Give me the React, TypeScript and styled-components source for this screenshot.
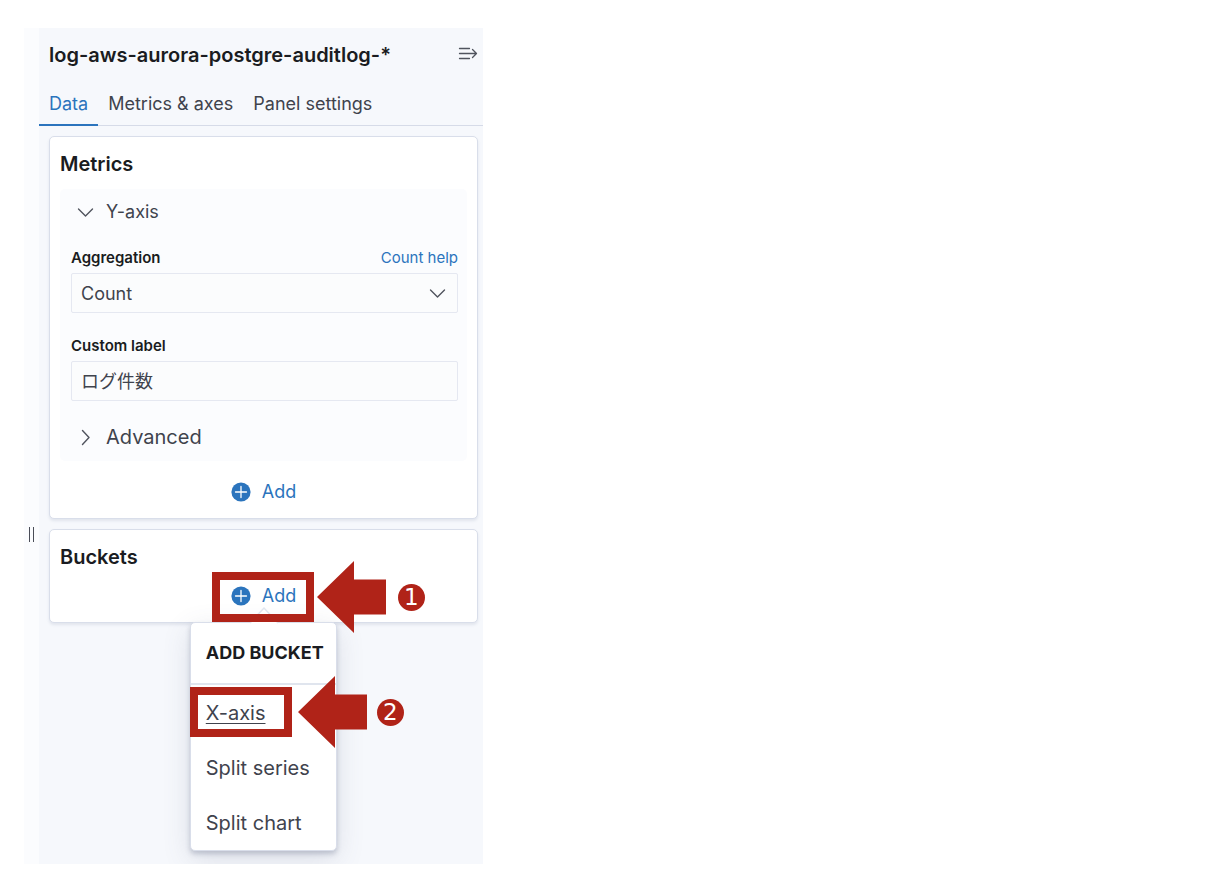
import React from "react";
import styled, { createGlobalStyle, css } from "styled-components";

const blue = "#2b74bd";
const ink = "#1a1c21";
const text = "#3f434d";
const red = "#b02318";

const GlobalStyle = createGlobalStyle`
  *, *::before, *::after { box-sizing: border-box; }
  body {
    margin: 0;
    background: #fff;
    color: ${text};
    font-family: Inter, "Noto Sans CJK JP", sans-serif;
    font-size: 18px;
    line-height: 24px;
  }
  button, input, select { font: inherit; color: inherit; margin: 0; }
  h1, h2, h3, ul { margin: 0; padding: 0; }
`;

const Page = styled.div`
  display: flex;
  min-height: 100vh;
  padding: 28px 24px 30px;
`;

const Sidebar = styled.aside`
  display: flex;
  flex: 0 1 459px;
  min-width: 0;
`;

const Resizer = styled.button`
  display: flex;
  flex: none;
  width: 15px;
  align-items: center;
  justify-content: center;
  gap: 3px;
  padding: 176px 0 0;
  border: 0;
  background: #fbfcfe;
  cursor: col-resize;
  &::before, &::after {
    content: "";
    width: 1px;
    height: 15px;
    background: #4a4d57;
  }
`;

const Panel = styled.div`
  flex: 1;
  min-width: 0;
  overflow: clip;
  background: #f6f8fc;
`;

const TitleBar = styled.header`
  display: flex;
  align-items: center;
  justify-content: space-between;
  height: 52px;
  padding: 0 5px 0 10px;
`;

const Title = styled.h1`
  padding-top: 2px;
  color: ${ink};
  font-size: 20px;
  font-weight: 600;
  line-height: 24px;
`;

const IconButton = styled.button`
  display: flex;
  padding: 0;
  border: 0;
  background: none;
  cursor: pointer;
`;

const Tabs = styled.nav`
  display: flex;
  height: 46px;
  box-shadow: inset 0 -1px 0 #d6dbe8;
`;

const Tab = styled.button<{ $active?: boolean }>`
  padding: 2px 10px 0;
  border: 0;
  background: none;
  box-shadow: ${(p) => (p.$active ? `inset 0 -2px 0 ${blue}` : "none")};
  color: ${(p) => (p.$active ? blue : text)};
  white-space: nowrap;
  cursor: pointer;
`;

const Cards = styled.div`
  display: flex;
  flex-direction: column;
  gap: 10px;
  padding: 10px 5px 10px 10px;
`;

const Card = styled.section`
  padding: 10px 10px 5px;
  border: 1px solid #d9deea;
  border-radius: 5px;
  background: #fff;
  box-shadow: 0 2px 3px rgba(120, 130, 160, 0.16);
`;

const CardTitle = styled.h2`
  padding-top: 2px;
  color: ${ink};
  font-size: 20px;
  font-weight: 600;
  line-height: 30px;
`;

const Group = styled.div`
  margin-top: 10px;
  padding: 0 9px 0 11px;
  border-radius: 5px;
  background: #fbfcfe;
`;

const Toggle = styled.button<{ $large?: boolean }>`
  display: flex;
  align-items: center;
  gap: 12px;
  width: 100%;
  height: ${(p) => (p.$large ? 48 : 46)}px;
  padding: 0 0 0 6px;
  border: 0;
  background: none;
  font-size: ${(p) => (p.$large ? 20 : 18)}px;
  cursor: pointer;
`;

const Field = styled.div<{ $first?: boolean }>`
  padding: ${(p) => (p.$first ? 10 : 20)}px 0 0;
  &:last-of-type { padding-bottom: 12px; }
`;

const LabelRow = styled.div`
  display: flex;
  justify-content: space-between;
  padding-top: 1px;
  margin-bottom: 3px;
  font-size: 15px;
`;

const Label = styled.label`
  color: ${ink};
  font-weight: 600;
`;

const HelpLink = styled.a`
  color: ${blue};
  text-decoration: none;
`;

const control = css`
  display: block;
  width: 100%;
  height: 40px;
  padding: 0 9px;
  border: 1px solid #e5e8f1;
  border-radius: 2px;
  background: #fbfcfd;
  font-size: 18px;
  outline: 0;
`;

const SelectWrap = styled.div`
  display: grid;
  align-items: center;
  > * { grid-area: 1 / 1; }
  > svg {
    justify-self: end;
    margin-right: 12px;
    pointer-events: none;
  }
`;

const Select = styled.select`
  ${control}
  padding-top: 2px;
  appearance: none;
`;

const Input = styled.input`
  ${control}
  padding-bottom: 2px;
`;

const AddRow = styled.div<{ $gap: number }>`
  display: flex;
  justify-content: center;
  margin-top: ${(p) => p.$gap}px;
`;

const Anchor = styled.div`
  position: relative;
`;

const AddButton = styled.button`
  display: flex;
  align-items: center;
  gap: 11px;
  height: 42px;
  padding: 0;
  border: 0;
  background: none;
  color: ${blue};
  cursor: pointer;
`;

const Popover = styled.div`
  position: absolute;
  z-index: 1;
  top: 47px;
  left: -41px;
  width: 147px;
  border: 1px solid #d9deea;
  border-radius: 5px;
  background: #fff;
  box-shadow: 0 3px 5px rgba(80, 90, 120, 0.28), 0 8px 28px rgba(80, 90, 120, 0.16);
`;

const Beak = styled.svg`
  position: absolute;
  top: -17px;
  left: 59px;
`;

const PopoverTitle = styled.h3`
  padding: 18px 15px;
  border-bottom: 2px solid #e0e5ee;
  color: ${ink};
  font-size: 18px;
  font-weight: 700;
  line-height: 24px;
  white-space: nowrap;
`;

const Menu = styled.ul`
  list-style: none;
`;

const MenuEntry = styled.li`
  position: relative;
`;

const MenuItem = styled.button<{ $focused?: boolean }>`
  width: 100%;
  height: 55px;
  padding: 0 15px;
  border: 0;
  background: none;
  font-size: 20px;
  text-align: left;
  text-decoration: ${(p) => (p.$focused ? "underline" : "none")};
  text-decoration-thickness: 1px;
  text-underline-offset: 3px;
  white-space: nowrap;
  cursor: pointer;
`;

const Callout = styled.div<{ $top: number; $left: number }>`
  position: absolute;
  z-index: 2;
  top: ${(p) => p.$top}px;
  left: ${(p) => p.$left}px;
  display: flex;
  align-items: center;
  pointer-events: none;
`;

const Frame = styled.span`
  width: 102px;
  height: 50px;
  border: 8px solid ${red};
`;

const Arrow = styled.svg<{ $gap: number }>`
  margin-left: ${(p) => p.$gap}px;
`;

const Step = styled.span<{ $gap: number }>`
  display: grid;
  place-items: center;
  width: 27px;
  height: 27px;
  margin-left: ${(p) => p.$gap}px;
  border-radius: 50%;
  background: ${red};
  color: #fff;
  font: 23px/27px "DejaVu Sans", sans-serif;
`;

function Chevron({ right }: { right?: boolean }) {
  return (
    <svg width="17" height="17" viewBox="0 0 17 17" fill="none" stroke="#50545e" strokeWidth="1.4" strokeLinecap="round" strokeLinejoin="round">
      <path d={right ? "M5.5 1.5 L12 8.5 L5.5 15.5" : "M1.5 5 L8.5 12 L15.5 5"} />
    </svg>
  );
}

function PlusIcon() {
  return (
    <svg width="20" height="20" viewBox="0 0 20 20">
      <circle cx="10" cy="10" r="9.6" fill={blue} />
      <path d="M10 4.5V15.5M4.5 10H15.5" stroke="#fff" strokeWidth="1.3" strokeLinecap="round" />
    </svg>
  );
}

function Marker({ step, top, left, arrowGap, stepGap }: { step: number; top: number; left: number; arrowGap: number; stepGap: number }) {
  return (
    <Callout $top={top} $left={left}>
      <Frame />
      <Arrow $gap={arrowGap} width="69" height="72" viewBox="0 0 69 72">
        <path d="M0 36 L37 0 V18.5 H69 V53.5 H37 V72 Z" fill={red} />
      </Arrow>
      <Step $gap={stepGap}>{step}</Step>
    </Callout>
  );
}

export default function App() {
  return (
    <>
      <GlobalStyle />
      <Page>
        <Sidebar>
          <Resizer aria-label="Resize panel" />
          <Panel>
            <TitleBar>
              <Title>log-aws-aurora-postgre-auditlog-*</Title>
              <IconButton aria-label="Collapse panel">
                <svg width="20" height="16" viewBox="0 0 20 16" fill="none" stroke="#50545e" strokeWidth="1.3" strokeLinecap="round" strokeLinejoin="round">
                  <path d="M1.5 2.5H11.5M1.5 7.5H18.5M1.5 12.5H11.5M14.5 3.5L18.5 7.5L14.5 11.5" />
                </svg>
              </IconButton>
            </TitleBar>
            <Tabs>
              <Tab $active>Data</Tab>
              <Tab>Metrics &amp; axes</Tab>
              <Tab>Panel settings</Tab>
            </Tabs>
            <Cards>
              <Card>
                <CardTitle>Metrics</CardTitle>
                <Group>
                  <Toggle aria-expanded="true"><Chevron />Y-axis</Toggle>
                  <Field $first>
                    <LabelRow>
                      <Label htmlFor="aggregation">Aggregation</Label>
                      <HelpLink href="#count">Count help</HelpLink>
                    </LabelRow>
                    <SelectWrap>
                      <Select id="aggregation" defaultValue="count">
                        <option value="count">Count</option>
                      </Select>
                      <Chevron />
                    </SelectWrap>
                  </Field>
                  <Field>
                    <LabelRow>
                      <Label htmlFor="custom-label">Custom label</Label>
                    </LabelRow>
                    <Input id="custom-label" defaultValue="ログ件数" />
                  </Field>
                  <Toggle $large aria-expanded="false"><Chevron right />Advanced</Toggle>
                </Group>
                <AddRow $gap={10}>
                  <AddButton><PlusIcon />Add</AddButton>
                </AddRow>
              </Card>
              <Card>
                <CardTitle>Buckets</CardTitle>
                <AddRow $gap={3}>
                  <Anchor>
                    <AddButton aria-expanded="true"><PlusIcon />Add</AddButton>
                    <Popover>
                      <Beak width="28" height="18" viewBox="0 0 28 18">
                        <path d="M0 17 L14 2 L28 17" fill="#fff" stroke="#e0e5ee" strokeWidth="1.5" />
                      </Beak>
                      <PopoverTitle>ADD BUCKET</PopoverTitle>
                      <Menu>
                        <MenuEntry>
                          <MenuItem $focused>X-axis</MenuItem>
                          <Marker step={2} top={-9} left={-1} arrowGap={6} stepGap={10} />
                        </MenuEntry>
                        <MenuEntry><MenuItem>Split series</MenuItem></MenuEntry>
                        <MenuEntry><MenuItem>Split chart</MenuItem></MenuEntry>
                      </Menu>
                    </Popover>
                    <Marker step={1} top={-14} left={-19} arrowGap={3} stepGap={12} />
                  </Anchor>
                </AddRow>
              </Card>
            </Cards>
          </Panel>
        </Sidebar>
      </Page>
    </>
  );
}
